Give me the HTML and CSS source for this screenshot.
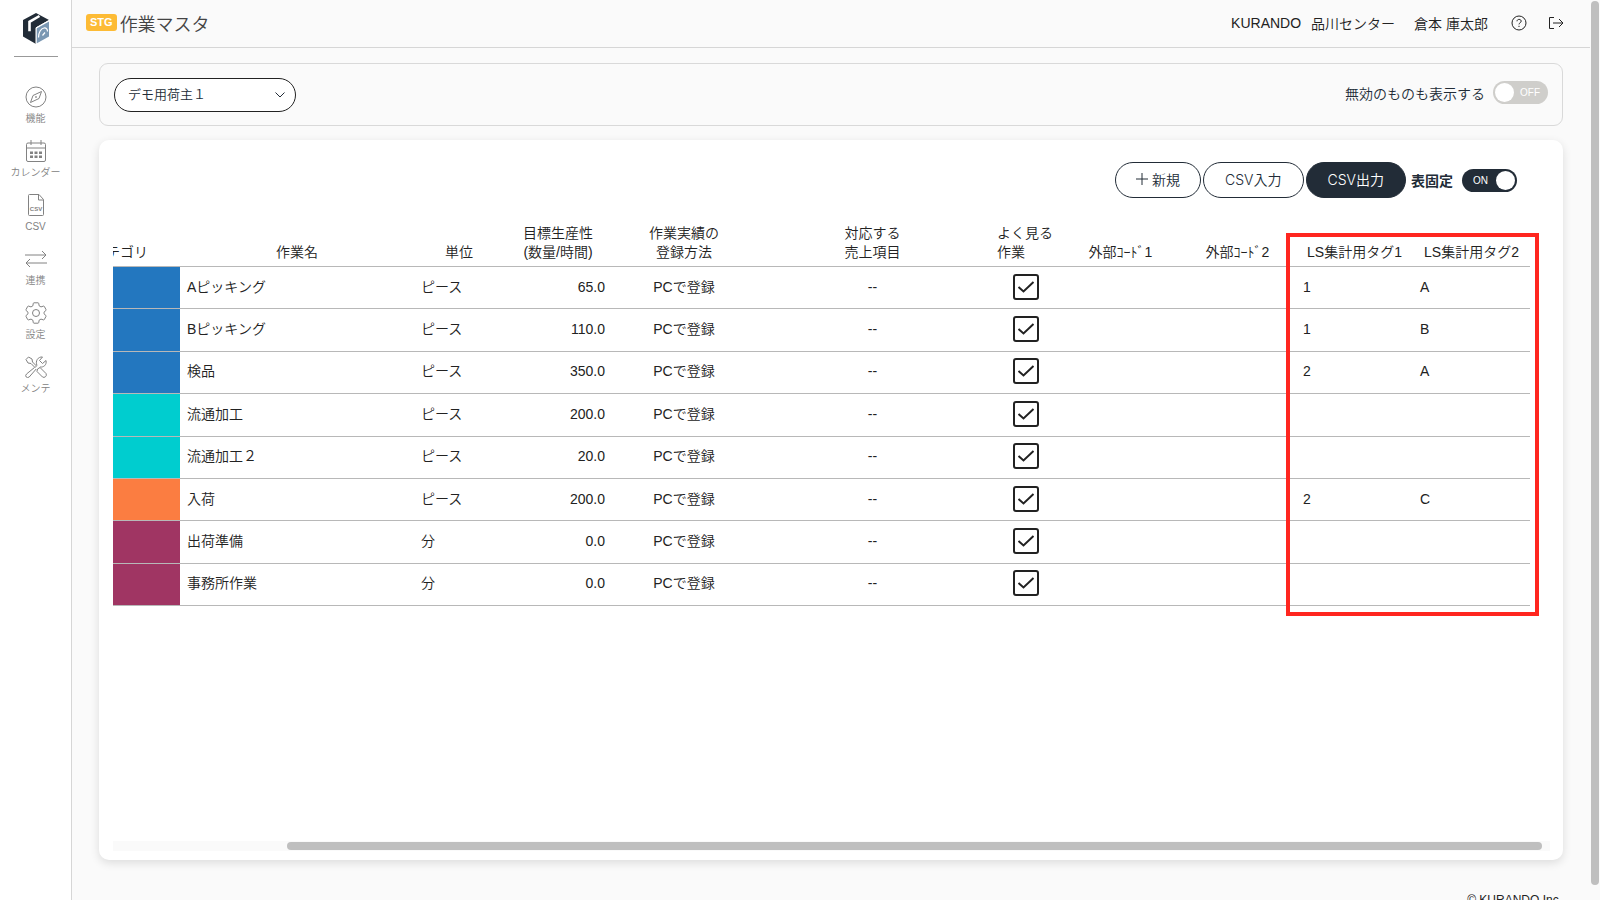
FILE: index.html
```html
<!DOCTYPE html>
<html lang="ja">
<head>
  <meta charset="UTF-8">
  <title>作業マスタ</title>
  <link rel="stylesheet" href="styles.css">
</head>
<body>
  <nav class="sidebar">
    <a class="logo" href="#" aria-label="ホーム">
      <svg width="26" height="31" viewBox="0 0 26 31">
        <path fill="#222c37" d="M13 0 26 7 13 14.500V31L0 23.500V7z"/>
        <path fill="#7b98b3" d="M13.500 15.500 26 8.500v15L13.500 30.500z"/>
        <path fill="none" stroke="#fff" stroke-width="2.600" d="M16.500 3 6.500 8.800v9.500"/>
        <path fill="none" stroke="#fff" stroke-width="1" d="M13 31V14.800L26 7.500"/>
        <path fill="none" stroke="#fff" stroke-width="1.200" d="M15.500 24.500c0-5 2.500-9 5.500-9.500 2.500-.3 3.500 1.500 3.500 3.500M19.500 22.500l2.500-3"/>
      </svg>
    </a>
    <a class="nav-item" href="#">
      <svg class="nav-icon" viewBox="0 0 22 22">
        <circle cx="11" cy="11" r="10"/>
        <path d="M16.500 5.500 14 12.500 5.500 16.500 8 9.500z" stroke-linejoin="round"/>
        <circle cx="11" cy="11" r=".5"/>
      </svg>
      <span>機能</span>
    </a>
    <a class="nav-item" href="#">
      <svg class="nav-icon" viewBox="0 0 22 22">
        <rect x="1.500" y="3" width="19" height="18.500" rx="1.500"/>
        <path d="M1.500 8h19M6 0v5M16 0v5"/>
        <path class="dots" d="M5 11.500h3v2.500H5zM9.500 11.500h3v2.500h-3zM14 11.500h3v2.500h-3zM5 15.500h3V18H5zM9.500 15.500h3V18h-3zM14 15.500h3V18h-3z"/>
      </svg>
      <span>カレンダー</span>
    </a>
    <a class="nav-item" href="#">
      <svg class="nav-icon" viewBox="0 0 22 22">
        <path d="M3.500 1.500q0-1 1-1h9.500l4.500 5v15q0 1-1 1h-13q-1 0-1-1zM13.500.5v5.500h5"/>
        <text x="11" y="16.500" text-anchor="middle">CSV</text>
      </svg>
      <span>CSV</span>
    </a>
    <a class="nav-item" href="#">
      <svg class="nav-icon" viewBox="0 0 22 22">
        <path d="M0 7h21M17 3l4 4-4 4M22 15H1M5 11l-4 4 4 4"/>
      </svg>
      <span>連携</span>
    </a>
    <a class="nav-item" href="#">
      <svg class="nav-icon" viewBox="0 0 22 22">
        <circle cx="11" cy="11" r="3.500"/>
        <path stroke-linejoin="round" d="M9 .8h4q.6 0 .7.6l.5 2.500 1.800 1 2.500-.8q.5-.2.8.3l1.700 3.200q.3.500-.1.900L19 10.200v1.600l1.900 1.700q.4.400.1.900l-1.700 3.200q-.3.500-.8.300l-2.500-.8-1.800 1-.5 2.500q-.1.600-.7.600H9q-.6 0-.7-.6l-.5-2.500-1.800-1-2.500.8q-.5.200-.8-.3L1 14.400q-.3-.5.100-.9L3 11.800v-1.600L1.100 8.500Q.7 8.100 1 7.600l1.700-3.200q.3-.5.800-.3l2.500.8 1.800-1 .5-2.500Q8.400.8 9 .8z"/>
      </svg>
      <span>設定</span>
    </a>
    <a class="nav-item" href="#">
      <svg class="nav-icon" viewBox="0 0 22 22">
        <path stroke-linejoin="round" d="M1 3.500 3.500 1l3.500 2 .5 3 4 4-1.500 1.500-4-4-3-.5zM12.500 13l2.500-1.500 6 6q1 2-.5 3.200-1.500 1.300-3 .3l-5.500-5.500zM9.500 11.500 1.500 18q-1.500 1.500-.3 3 1.300 1.200 3 0l7-8M12 9.500C10 5 13 .5 17.500 1L14.500 4.500 17.500 7.500 21 4.500c1 4.500-2.500 7-6 6.500"/>
      </svg>
      <span>メンテ</span>
    </a>
  </nav>

  <div class="page">
    <header class="header">
      <span class="badge">STG</span>
      <h1 class="title">作業マスタ</h1>
      <div class="account">
        <span>KURANDO</span>
        <span class="center-name">品川センター</span>
        <span class="user-name">倉本 庫太郎</span>
        <button class="icon-btn" aria-label="ヘルプ">
          <svg width="16" height="16" viewBox="0 0 16 16">
            <circle cx="8" cy="8" r="7"/>
            <path d="M6 6.300C6 3.700 10.200 3.800 10.200 6.200c0 1.500-2.200 1.600-2.200 3.200M8 10.800v1.200"/>
          </svg>
        </button>
        <button class="icon-btn" aria-label="ログアウト">
          <svg width="16" height="16" viewBox="0 0 16 16">
            <path d="M6 2.500H1.500v11H6M5 8h10M11 4l4 4-4 4"/>
          </svg>
        </button>
      </div>
    </header>

    <main class="content">
      <section class="filter">
        <div class="select-wrap">
          <select class="select" aria-label="荷主">
            <option>デモ用荷主１</option>
          </select>
          <svg class="chevron" width="10" height="6" viewBox="0 0 10 6"><path d="M.5.5 5 5 9.500.5"/></svg>
        </div>
        <div class="filter-switch">
          <label for="show-invalid">無効のものも表示する</label>
          <label class="toggle">
            <input type="checkbox" id="show-invalid">
            <span class="off">OFF</span>
          </label>
        </div>
      </section>

      <section class="card">
        <div class="toolbar">
          <button class="btn btn-new"><svg width="12" height="12" viewBox="0 0 12 12"><path d="M6 0v12M0 6h12"/></svg>新規</button>
          <button class="btn">CSV入力</button>
          <button class="btn btn-dark">CSV出力</button>
          <label class="fix-label" for="fix-table">表固定</label>
          <label class="toggle">
            <input type="checkbox" id="fix-table" checked>
            <span class="on">ON</span>
          </label>
        </div>

        <div class="table-area">
          <div class="table-clip">
            <table class="table">
              <colgroup>
                <col class="col-category"><col class="col-name"><col class="col-unit"><col class="col-target"><col class="col-method"><col class="col-sales"><col class="col-often"><col class="col-code"><col class="col-code"><col class="col-code"><col class="col-code">
              </colgroup>
              <thead>
                <tr>
                  <th>カテゴリ</th>
                  <th>作業名</th>
                  <th>単位</th>
                  <th>目標生産性<br>(数量/時間)</th>
                  <th>作業実績の<br>登録方法</th>
                  <th>対応する<br>売上項目</th>
                  <th class="left">よく見る<br>作業</th>
                  <th>外部ｺｰﾄﾞ1</th>
                  <th>外部ｺｰﾄﾞ2</th>
                  <th>LS集計用タグ1</th>
                  <th>LS集計用タグ2</th>
                </tr>
              </thead>
              <tbody>
                <tr><td class="blue"></td><td>Aピッキング</td><td>ピース</td><td class="num">65.0</td><td class="mid">PCで登録</td><td class="mid">--</td><td class="mid"><input class="check" type="checkbox" aria-label="よく見る作業" checked></td><td></td><td></td><td>1</td><td>A</td></tr>
                <tr><td class="blue"></td><td>Bピッキング</td><td>ピース</td><td class="num">110.0</td><td class="mid">PCで登録</td><td class="mid">--</td><td class="mid"><input class="check" type="checkbox" aria-label="よく見る作業" checked></td><td></td><td></td><td>1</td><td>B</td></tr>
                <tr><td class="blue"></td><td>検品</td><td>ピース</td><td class="num">350.0</td><td class="mid">PCで登録</td><td class="mid">--</td><td class="mid"><input class="check" type="checkbox" aria-label="よく見る作業" checked></td><td></td><td></td><td>2</td><td>A</td></tr>
                <tr><td class="teal"></td><td>流通加工</td><td>ピース</td><td class="num">200.0</td><td class="mid">PCで登録</td><td class="mid">--</td><td class="mid"><input class="check" type="checkbox" aria-label="よく見る作業" checked></td><td></td><td></td><td></td><td></td></tr>
                <tr><td class="teal"></td><td>流通加工２</td><td>ピース</td><td class="num">20.0</td><td class="mid">PCで登録</td><td class="mid">--</td><td class="mid"><input class="check" type="checkbox" aria-label="よく見る作業" checked></td><td></td><td></td><td></td><td></td></tr>
                <tr><td class="orange"></td><td>入荷</td><td>ピース</td><td class="num">200.0</td><td class="mid">PCで登録</td><td class="mid">--</td><td class="mid"><input class="check" type="checkbox" aria-label="よく見る作業" checked></td><td></td><td></td><td>2</td><td>C</td></tr>
                <tr><td class="purple"></td><td>出荷準備</td><td>分</td><td class="num">0.0</td><td class="mid">PCで登録</td><td class="mid">--</td><td class="mid"><input class="check" type="checkbox" aria-label="よく見る作業" checked></td><td></td><td></td><td></td><td></td></tr>
                <tr><td class="purple"></td><td>事務所作業</td><td>分</td><td class="num">0.0</td><td class="mid">PCで登録</td><td class="mid">--</td><td class="mid"><input class="check" type="checkbox" aria-label="よく見る作業" checked></td><td></td><td></td><td></td><td></td></tr>
              </tbody>
            </table>
          </div>
          <div class="highlight"></div>
        </div>
        <div class="hscroll"><div class="hscroll-thumb"></div></div>
      </section>
    </main>

    <footer class="footer">© KURANDO Inc.</footer>
  </div>
  <div class="vscroll"><div class="vscroll-thumb"></div></div>
</body>
</html>
```
FILE: styles.css
```css
* {
  box-sizing: border-box;
}
body {
  display: flex;
  height: 100vh;
  margin: 0;
  overflow: hidden;
  background: #fafafa;
  color: #222;
  font-family: "Liberation Sans", "Noto Sans CJK JP", sans-serif;
  font-size: 14px;
  font-weight: 350;
}
button, input, select {
  font: inherit;
  color: inherit;
}
svg {
  fill: none;
  stroke: currentColor;
}

/* Sidebar */
.sidebar {
  display: flex;
  flex: none;
  flex-direction: column;
  align-items: center;
  width: 72px;
  padding-top: 13px;
  border-right: 1px solid #d6d6d6;
  background: #fff;
}
.logo {
  width: 44px;
  height: 44px;
  margin-bottom: 29px;
  border-bottom: 1px solid #999;
  text-align: center;
}
.logo svg {
  stroke: none;
}
.nav-item {
  display: flex;
  flex-direction: column;
  align-items: center;
  gap: 3px;
  height: 54px;
  color: #828282;
  font-size: 10px;
  line-height: 16px;
  text-decoration: none;
  white-space: nowrap;
}
.nav-icon {
  width: 22px;
  height: 22px;
}
.nav-icon .dots {
  fill: #828282;
  stroke: none;
}
.nav-icon text {
  fill: #828282;
  stroke: none;
  font-size: 6px;
  font-weight: bold;
}

/* Header */
.page {
  display: flex;
  flex: 1;
  flex-direction: column;
  min-width: 0;
}
.header {
  display: flex;
  flex: none;
  align-items: center;
  height: 48px;
  padding: 0 26px 2px 14px;
  border-bottom: 1px solid #d6d6d6;
}
.badge {
  margin-right: 3px;
  padding: 0 4px;
  border-radius: 3px;
  background: #fdbb35;
  color: #fff;
  font-size: 11px;
  font-weight: bold;
  line-height: 17px;
}
.title {
  margin: 0;
  color: #444;
  font-size: 18px;
  font-weight: 350;
}
.account {
  display: flex;
  align-items: center;
  margin-left: auto;
}
.center-name {
  margin-left: 10px;
}
.user-name {
  margin: 0 2px 0 19px;
}
.icon-btn {
  display: flex;
  margin-left: 21px;
  padding: 0;
  border: 0;
  background: none;
  cursor: pointer;
}

/* Filter */
.content {
  padding: 15px 27px 0;
}
.filter {
  display: flex;
  align-items: center;
  justify-content: space-between;
  height: 63px;
  margin-bottom: 14px;
  padding: 0 14px;
  border: 1px solid #d9d9d9;
  border-radius: 9px;
  color: #222c37;
}
.select-wrap {
  position: relative;
}
.select {
  width: 182px;
  height: 34px;
  padding: 0 13px;
  border: 1px solid #222;
  border-radius: 17px;
  background: #fff;
  font-size: 13px;
  appearance: none;
}
.chevron {
  position: absolute;
  top: 14px;
  right: 11px;
  pointer-events: none;
}
.filter-switch {
  display: flex;
  align-items: center;
  gap: 8px;
  padding-bottom: 4px;
}
.toggle {
  display: flex;
  align-items: center;
  width: 55px;
  height: 23px;
  padding: 0 2px;
  border-radius: 12px;
  background: #cfcecb;
  color: #fff;
  font-size: 10px;
  cursor: pointer;
}
.toggle input {
  width: 19px;
  height: 19px;
  margin: 0;
  border-radius: 50%;
  background: #fff;
  appearance: none;
}
.toggle .off {
  margin-left: 6px;
}
.toggle:has(:checked) {
  flex-direction: row-reverse;
  background: #222c37;
}
.toggle .on {
  margin-right: 8px;
}

/* Card */
.card {
  display: flex;
  flex-direction: column;
  min-height: calc(100vh - 180px);
  padding: 22px 13px 9px 14px;
  border-radius: 10px;
  background: #fff;
  box-shadow: 0 3px 10px rgba(0, 0, 0, .12);
}
.toolbar {
  display: flex;
  align-items: center;
  justify-content: flex-end;
  gap: 2px;
  margin: 0 33px 25px 0;
  color: #222c37;
}
.btn {
  height: 36px;
  padding: 0 21px 2px;
  border: 1px solid #222c37;
  border-radius: 18px;
  background: #fff;
  font-family: Inter, "Noto Sans CJK JP", sans-serif;
  cursor: pointer;
}
.btn-new {
  display: flex;
  align-items: center;
  gap: 4px;
  padding: 0 20px 2px;
}
.btn-dark {
  background: #222c37;
  color: #fff;
}
.fix-label {
  margin: 0 7px 0 3px;
  font-weight: bold;
}

/* Table, scrolled to its right end */
.table-area {
  position: relative;
  flex: 1;
}
.table-clip {
  display: flex;
  justify-content: flex-end;
  padding-right: 20px;
  overflow: hidden;
}
.table {
  flex: none;
  width: 1470px;
  height: 383px;
  border-spacing: 0;
  table-layout: fixed;
}
.col-category { width: 120px; }
.col-name { width: 234px; }
.col-unit { width: 90px; }
.col-target { width: 108px; }
.col-method { width: 144px; }
.col-sales { width: 233px; }
.col-often { width: 73px; }
.col-code { width: 117px; }
.table th {
  height: 44px;
  padding: 0 0 4px;
  border-bottom: 1px solid #b8b8b8;
  font-weight: 350;
  line-height: 19px;
  vertical-align: bottom;
  white-space: nowrap;
}
.table th.left {
  padding-left: 8px;
  text-align: left;
}
.table td {
  height: 42px;
  padding: 0 7px 2px;
  border-bottom: 1px solid #b8b8b8;
  line-height: 20px;
}
.table .num {
  text-align: right;
}
.table .mid {
  text-align: center;
}
.table .blue { background: #2377bf; }
.table .teal { background: #00cdcf; }
.table .orange { background: #fb7d41; }
.table .purple { background: #a03563; }
.check {
  display: block;
  width: 26px;
  height: 26px;
  margin: 0 auto;
  border: 2px solid #222;
  border-radius: 3px;
  background: #fff;
  appearance: none;
}
.check:checked {
  background: url("data:image/svg+xml,%3Csvg xmlns='http://www.w3.org/2000/svg' viewBox='0 0 22 22'%3E%3Cpath d='M3.500 11l5 4.500L18.500 6' fill='none' stroke='%23222' stroke-width='2'/%3E%3C/svg%3E") center / 22px no-repeat;
}
.highlight {
  position: absolute;
  top: 10px;
  right: 11px;
  width: 253px;
  height: 383px;
  border: 4px solid #ff261f;
}

/* Scrollbars */
.hscroll {
  height: 10px;
  padding: 1px 8px 1px 12.1%;
  background: #fafafa;
}
.hscroll-thumb {
  height: 8px;
  border-radius: 4px;
  background: #bfbfbf;
}
.vscroll {
  flex: none;
  width: 10px;
  padding: 1px;
}
.vscroll-thumb {
  height: calc(100% - 14px);
  border-radius: 4px;
  background: #bfbfbf;
}

.footer {
  margin-top: 32px;
  padding-right: 28px;
  font-size: 12px;
  line-height: 16px;
  text-align: right;
}
```
